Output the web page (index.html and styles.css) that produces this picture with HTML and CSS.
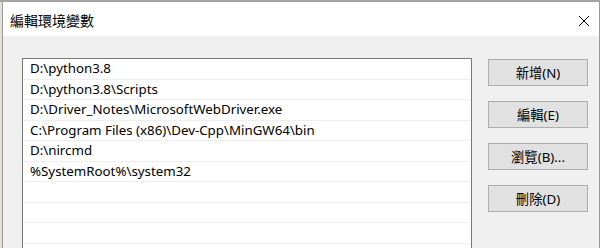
FILE: index.html
```html
<!DOCTYPE html>
<html lang="zh-Hant">
<head>
  <meta charset="UTF-8">
  <title>編輯環境變數</title>
  <link rel="stylesheet" href="styles.css">
</head>
<body>
  <div class="edge"></div>
  <div class="window">
    <div class="titlebar">
      <span class="title">編輯環境變數</span>
      <svg class="close" width="12" height="12" viewBox="0 0 12 12">
        <path d="M1 1L11 11M11 1L1 11" stroke="#000" stroke-width="1" fill="none"/>
      </svg>
    </div>
    <div class="content">
      <ul class="pathlist">
        <li>D:\python3.8</li>
        <li>D:\python3.8\Scripts</li>
        <li>D:\Driver_Notes\MicrosoftWebDriver.exe</li>
        <li>C:\Program Files (x86)\Dev-Cpp\MinGW64\bin</li>
        <li>D:\nircmd</li>
        <li>%SystemRoot%\system32</li>
        <li></li>
        <li></li>
        <li></li>
        <li></li>
      </ul>
      <div class="buttons">
        <button>新增(N)</button>
        <button>編輯(E)</button>
        <button>瀏覽(B)...</button>
        <button>刪除(D)</button>
      </div>
    </div>
  </div>
</body>
</html>
```

FILE: styles.css
```css
body {
  margin: 0;
  width: 600px;
  height: 248px;
  overflow: hidden;
  display: flex;
  border-top: 2px solid #a3a3a3;
  box-sizing: border-box;
  background: #e8e8e8;
  font-family: 'Noto Sans', 'Noto Sans CJK TC', sans-serif;
  font-size: 13.3px;
  color: #000;
}
.edge {
  width: 2px;
  background: #e4e0dc;
}
.window {
  flex: 1;
  display: flex;
  flex-direction: column;
  border-left: 1px solid #9a9a9a;
  border-right: 1px solid #9a9a9a;
  background: #f0f0f0;
  overflow: hidden;
}
.titlebar {
  flex-shrink: 0;
  height: 34px;
  background: #fff;
  display: flex;
  align-items: center;
  justify-content: space-between;
  padding: 0 9px 0 7px;
}
.title {
  font-family: 'Noto Sans CJK TC', sans-serif;
  font-size: 14px;
  margin-top: 1px;
}
.close {
  margin-top: 3px;
}
.content {
  display: flex;
  gap: 16px;
  padding: 22px 0 0 19px;
}
.pathlist {
  flex-shrink: 0;
  list-style: none;
  margin: 0;
  padding: 0 1px;
  width: 446px;
  height: 200px;
  border: 1px solid #7a7a7a;
  background: #fff;
}
.pathlist li {
  height: 19.5px;
  line-height: 19px;
  padding-left: 6px;
  border-bottom: 1px solid #eeeeee;
  white-space: nowrap;
}
.buttons {
  display: flex;
  flex-direction: column;
  gap: 15px;
  padding-top: 1px;
}
.buttons button {
  width: 100px;
  height: 27px;
  margin: 0;
  padding: 0;
  border: 1px solid #adadad;
  background: #e1e1e1;
  font-family: 'Noto Sans', 'Noto Sans CJK TC', sans-serif;
  font-size: 13.3px;
  color: #000;
}
```
